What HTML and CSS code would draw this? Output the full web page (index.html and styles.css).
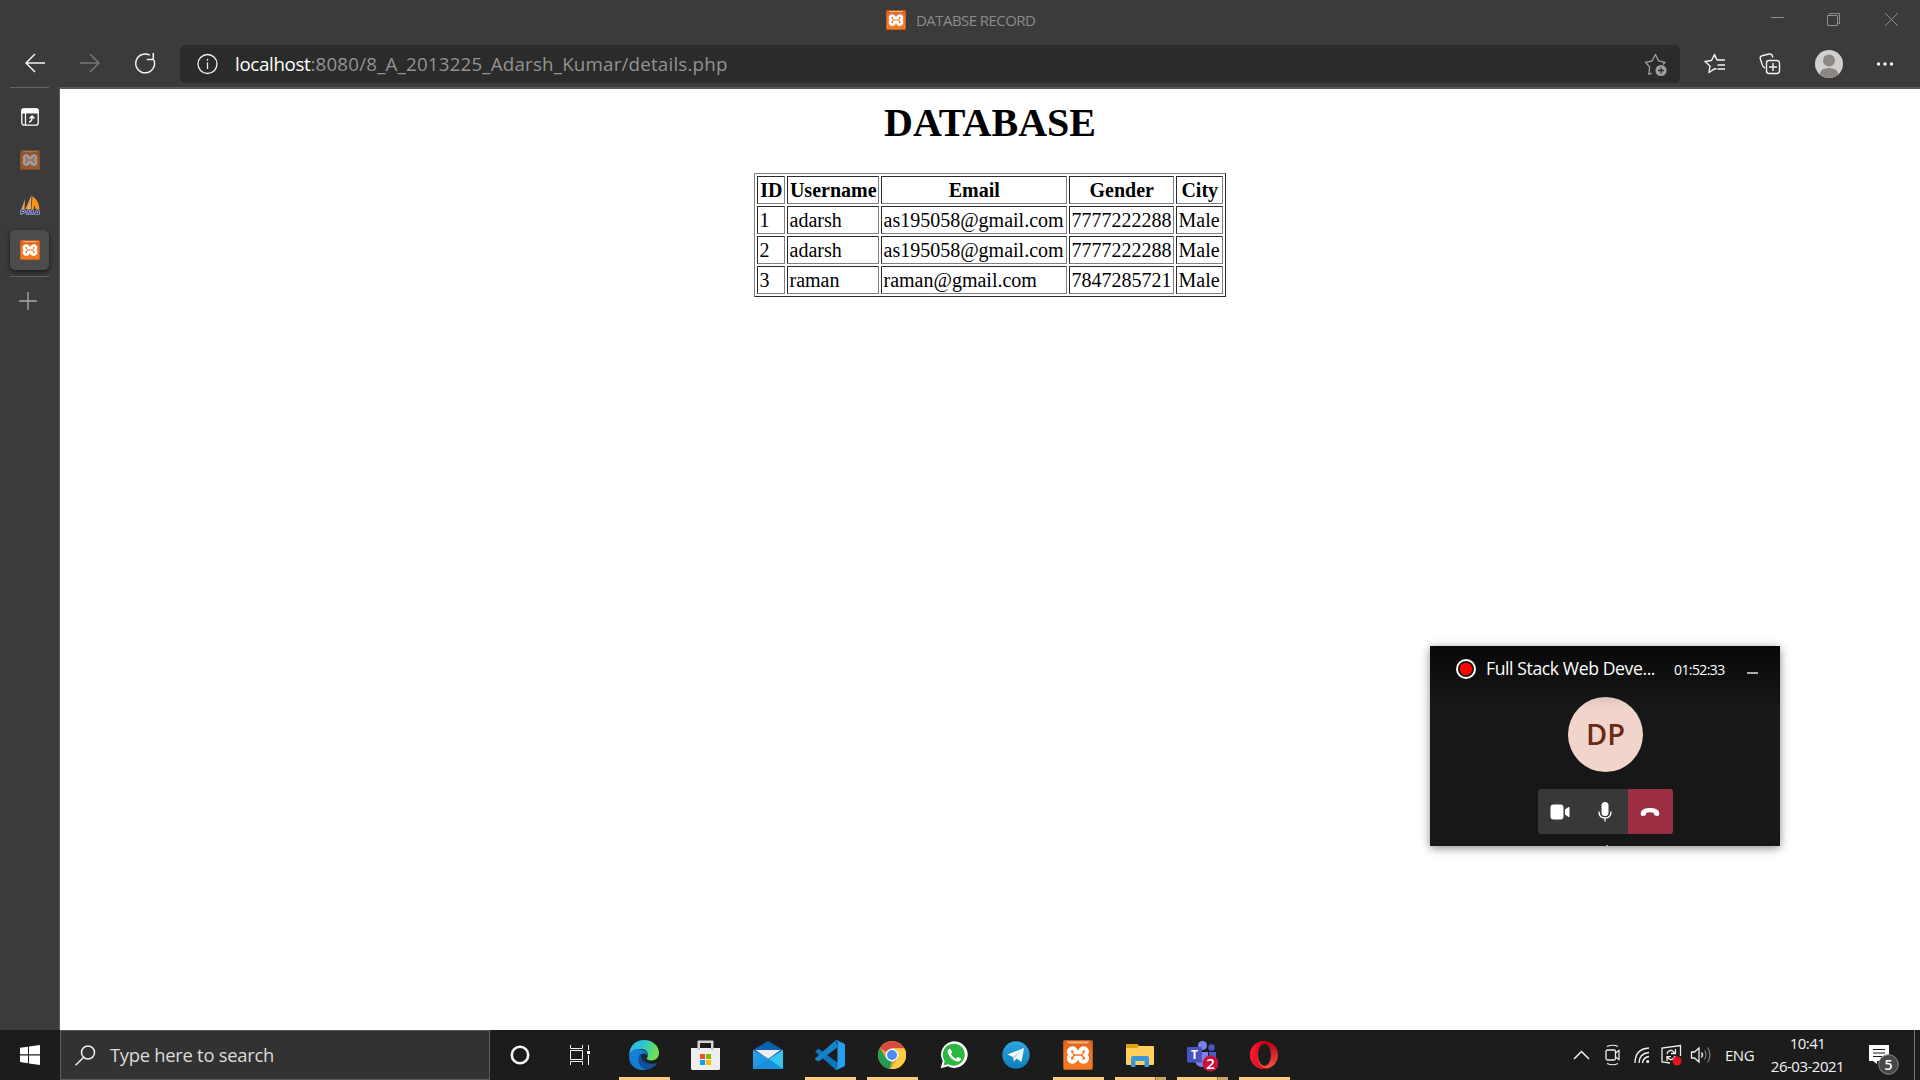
FILE: index.html
```html
<!DOCTYPE html>
<html lang="en">
<head>
<meta charset="utf-8">
<title>DATABSE RECORD</title>
<link rel="stylesheet" href="styles.css">
</head>
<body>
<svg width="0" height="0" class="defs" aria-hidden="true">
  <defs>
    <linearGradient id="gx" x1="0" y1="0" x2="0" y2="1"><stop offset="0" stop-color="#d9651b"/><stop offset=".5" stop-color="#f3752a"/><stop offset="1" stop-color="#f37a20"/></linearGradient>
    <linearGradient id="ge1" x1="0" y1="0" x2="1" y2=".3"><stop offset="0" stop-color="#35b1f0"/><stop offset=".5" stop-color="#2dc6d3"/><stop offset="1" stop-color="#70e052"/></linearGradient>
    <linearGradient id="ge2" x1="0" y1="0" x2=".6" y2="1"><stop offset="0" stop-color="#1583d8"/><stop offset="1" stop-color="#1279d2"/></linearGradient>
    <linearGradient id="gt" x1="0" y1="0" x2="0" y2="1"><stop offset="0" stop-color="#2ea5e0"/><stop offset="1" stop-color="#0f7ebc"/></linearGradient>
    <linearGradient id="go" x1="0" y1="0" x2="1" y2="0"><stop offset="0" stop-color="#ff1b2d"/><stop offset="1" stop-color="#c40019"/></linearGradient>
    <linearGradient id="go2" x1="0" y1="0" x2="0" y2="1"><stop offset="0" stop-color="#b00012"/><stop offset="1" stop-color="#ff5548"/></linearGradient>
    <linearGradient id="gm" x1="0" y1="0" x2="1" y2="1"><stop offset="0" stop-color="#2da6ee"/><stop offset="1" stop-color="#0f80d4"/></linearGradient>
  </defs>
  <symbol id="xampp" viewBox="0 0 30 30">
    <rect width="30" height="30" rx="2" fill="#b85a1e"/>
    <rect x="1" y="1" width="28" height="28" rx="1.5" fill="url(#gx)"/>
    <path d="M4 1.5H26Q26 3.5 22 3.5H8Q4 3.5 4 1.5Z" fill="#f7b183"/>
    <path d="M12.300 10A3.400 3.400 0 1 0 8.200 14.900A3.600 3.600 0 1 0 12.500 20.200V17.800H17.500V20.200A3.600 3.600 0 1 0 21.800 14.900A3.400 3.400 0 1 0 17.700 10V12.200H12.300Z" fill="none" stroke="#fff" stroke-width="4" stroke-linejoin="round"/>
  </symbol>
</svg>

<div class="browser">
  <header class="titlebar">
    <div class="tab-title"><svg width="20" height="20"><use href="#xampp"/></svg><span>DATABSE RECORD</span></div>
    <svg class="window-buttons" width="130" height="16" fill="none" stroke="#8e8e8e">
      <path d="M1 6.500H14M57.500 4.500H67.500V14.500H57.500ZM59.500 4V2.500H69.500V12.500H68M115 2L128 15M128 2L115 15"/>
    </svg>
  </header>

  <nav class="toolbar">
    <svg class="nav-icons" width="140" height="24" fill="none" stroke="#f2f2f2" stroke-width="1.500">
      <path d="M20 12H1M10 3L1 12L10 21"/>
      <path d="M55 12H74M65 3L74 12L65 21" stroke="#777"/>
      <path d="M129 9.200A9.400 9.400 0 1 1 124.800 4.200M128.300 2V8.500H121.800"/>
    </svg>
    <div class="address">
      <svg width="22" height="22" fill="none" stroke="#eee" stroke-width="1.300"><circle cx="10.500" cy="11" r="9.500"/><path d="M10.500 9.500V16M10.500 6V7.700"/></svg>
      <div class="url"><b>localhost</b>:8080/8_A_2013225_Adarsh_Kumar/details.php</div>
      <svg width="24" height="24" fill="none" stroke="#a0a0a0" stroke-width="1.300"><path d="M8 20L4.800 21.300L5.700 14L1.500 9.300L8 8L11.500 1.500L14.500 7.800L21 9.300L19 11.500" stroke-linejoin="round"/><circle cx="17" cy="17.500" r="5.600" fill="#a0a0a0" stroke="none"/><path d="M17 14.500V20.500M14 17.500H20" stroke="#2b2b2b"/></svg>
    </div>
    <div class="actions">
      <svg width="22" height="22" fill="none" stroke="#f2f2f2" stroke-width="1.500"><path d="M12.500 16L10.500 15.800L5 19.500L6 13L1 8.500L7.500 7.500L10.500 1.500L13 7H21M13.500 12H21M13.500 16H21" stroke-linejoin="round"/></svg>
      <svg width="22" height="22" fill="none" stroke="#f2f2f2" stroke-width="1.400"><path d="M6 15Q3.500 14 3 11L1.200 5.500Q.8 3.200 3 2.800L10 1Q12.500.6 13.200 2.500L13.800 4.500"/><rect x="7.500" y="7.500" width="13" height="13" rx="2.500"/><path d="M14 10V18M10 14H18"/></svg>
      <svg width="28" height="28"><circle cx="14" cy="14" r="14" fill="#d2d0ce"/><circle cx="14" cy="10.500" r="6" fill="#8b8784"/><path d="M4.500 24.200Q6 18 14 18T23.500 24.200A14 14 0 0 1 4.500 24.200Z" fill="#8b8784"/></svg>
      <svg width="18" height="6" fill="#f5f5f5"><circle cx="2.500" cy="3" r="1.700"/><circle cx="9" cy="3" r="1.700"/><circle cx="15.500" cy="3" r="1.700"/></svg>
    </div>
  </nav>

  <div class="main">
    <aside class="tabs">
      <div class="tab first"><svg width="18" height="18" fill="none" stroke="#fff"><rect x=".8" y=".8" width="16.400" height="16.400" rx="2.500" stroke-width="1.300"/><path d="M1 1H17V5H1Z" fill="#fff"/><path d="M4.500 5V17" stroke-width="1.300"/><path d="M8 14Q11.500 13 11 8.500M8.500 10.500L11 8L13.500 10.500" stroke-width="1.400"/></svg></div>
      <div class="tab second"><svg width="20" height="20"><use href="#xampp"/></svg></div>
      <div class="tab third"><svg width="20" height="20"><path d="M5 4L1.500 14H4.500ZM11.500 0L5.500 14H11Z" fill="#eba35c"/><path d="M12.500 1L11.500 14H13.500L14.500 10L15.500 14H19.500Q19 6 12.500 1Z" fill="#f7941e"/><text x="0" y="19.500" class="pma" textLength="20">PMA</text></svg></div>
      <div class="tab active"><svg width="20" height="20"><use href="#xampp"/></svg></div>
      <div class="new-tab"><svg width="18" height="18" stroke="#aaa" stroke-width="1.300"><path d="M0 9H18M9 0V18"/></svg></div>
    </aside>
    <main class="page">
      <h1>DATABASE</h1>
      <table>
        <colgroup><col class="c-id"><col class="c-user"><col class="c-mail"><col class="c-gender"><col class="c-city"></colgroup>
        <tr><th>ID</th><th>Username</th><th>Email</th><th>Gender</th><th>City</th></tr>
        <tr><td>1</td><td>adarsh</td><td>as195058@gmail.com</td><td>7777222288</td><td>Male</td></tr>
        <tr><td>2</td><td>adarsh</td><td>as195058@gmail.com</td><td>7777222288</td><td>Male</td></tr>
        <tr><td>3</td><td>raman</td><td>raman@gmail.com</td><td>7847285721</td><td>Male</td></tr>
      </table>
    </main>
  </div>
</div>

<section class="call">
  <div class="call-head">
    <svg width="20" height="20"><circle cx="10" cy="10" r="9" fill="#111" stroke="#fff" stroke-width="2"/><circle cx="10" cy="10" r="6.300" fill="#f00"/></svg>
    <span class="call-title">Full Stack Web Deve...</span>
    <span class="call-time">01:52:33</span>
    <i class="call-min"></i>
  </div>
  <div class="avatar">DP</div>
  <div class="call-buttons">
    <div><svg width="20" height="16" fill="#fff"><rect x=".5" y=".5" width="13" height="15" rx="3"/><path d="M15 5.500L18.500 3Q19.500 2.500 19.500 4V12Q19.500 13.500 18.500 13L15 10.500Z"/></svg></div>
    <div><svg width="14" height="20" fill="#fff"><rect x="3.500" y="0" width="7" height="14" rx="3.500"/><path d="M1 9.500Q1 16 7 16T13 9.500M7 16V19.500" fill="none" stroke="#fff" stroke-width="1.300"/></svg></div>
    <div class="hang"><svg width="20" height="10"><path d="M.7 6Q1.500 1 10 1T19.300 6Q19.500 9 17.500 9L15 8.500Q13.800 8.200 13.700 5.800Q10 4.500 6.300 5.800Q6.200 8.200 5 8.500L2.500 9Q.5 9 .7 6Z" fill="#fff"/></svg></div>
  </div>
  <i class="call-handle"></i>
</section>

<footer class="taskbar">
  <div class="start"><svg width="20" height="20" fill="#fff"><path d="M0 2.800L8 1.700V9.300H0ZM9 1.500L20 0V9.300H9ZM0 10.400H8V18.200L0 17.100ZM9 10.400H20V20L9 18.400Z"/></svg></div>
  <div class="search"><svg width="21" height="21" fill="none" stroke="#eee" stroke-width="1.500"><circle cx="13" cy="7.500" r="6.500"/><path d="M8.500 12.500L.5 20.300"/></svg><span>Type here to search</span></div>
  <div class="sys"><svg width="20" height="20"><circle cx="10" cy="10" r="8.200" fill="none" stroke="#f5f5f5" stroke-width="2.600"/></svg></div>
  <div class="sys"><svg width="20" height="20" fill="none" stroke="#f5f5f5"><path d="M.5 0V3.500H12.500V0M.5 5.500H12.500V14.500H.5ZM.5 20V16.500H12.500V20M18.500 0V5M18.500 10V20"/><path d="M17 6H20V9H17Z" fill="#fff" stroke="none"/></svg></div>
  <div class="apps">
    <div class="app open"><svg width="30" height="30"><path d="M.5 12C2 4 8 0 15 0C24 0 30 6 30 13C30 18 26 20.500 22 20.500C18 20.500 17 18.500 18.500 17C20 14 18 9 12 9C7 9 2 12 .3 16Z" fill="url(#ge1)"/><path d="M.3 16C1 10 6 8.500 10 9.500C17 10 20 13 18 17C18 14 12 13 10.500 17C8.500 23 12 28 18 29.500C8 32-1 25 .3 16Z" fill="url(#ge2)"/><path d="M12 13.500C7 17 9 27 18 29.700C23 28.700 26.500 26 28 23C26 22.500 26 24.500 20 23.500C15 22.500 12 18 12 13.500Z" fill="#12509c"/><path d="M18.300 17C18.500 13 13 12.500 12.500 15.500C12 18.500 14 21.500 16.500 22.500C19 23.300 21 22 21.500 20.500C18 20.500 17 18.500 18.300 17Z" fill="#1d2a3a"/></svg></div>
    <div class="app"><svg width="30" height="30"><path d="M6.500 10V1.500Q6.500.5 7.500.5H21.500Q22.500.5 22.500 1.500V10H20V3H9V10Z" fill="#d6d6d6"/><path d="M0 8H29V28.500Q29 30 27.500 30H1.500Q0 30 0 28.500Z" fill="#eee"/><path d="M6.500 8H9V10H6.500ZM20 8H22.500V10H20Z" fill="#c6c6c6"/><path d="M9 14H14V19H9Z" fill="#f25022"/><path d="M15 14H20V19H15Z" fill="#7fba00"/><path d="M9 20H14V25H9Z" fill="#00a4ef"/><path d="M15 20H20V25H15Z" fill="#ffb900"/></svg></div>
    <div class="app"><svg width="30" height="30"><path d="M0 10L15 1L30 10V18H0Z" fill="#0b62b0"/><path d="M2.500 10H27.500L15 19Z" fill="#eee"/><path d="M0 10L17 19.500L30 29H0Z" fill="url(#gm)"/><path d="M30 10L14 20L30 29Z" fill="#36c5f0"/><path d="M0 29L14 20L16 19L30 29Z" fill="#1a8fdd"/></svg></div>
    <div class="app open"><svg width="30" height="30"><path d="M.5 11L3.500 8.500L23 23V29L20.500 29.500L.5 12Z" fill="#0b76bd"/><path d="M0 18.500L20.500.3L23 7L3.500 21.500L.5 20Z" fill="#1683c8"/><path d="M21.500 0L29 3.500Q30 4 30 5V25Q30 26 29 26.500L21.500 30L20.500 29.300L22.500 28V2L20.500.5Z" fill="#279fec"/></svg></div>
    <div class="app open"><svg width="28" height="28"><circle cx="14" cy="14" r="14" fill="#e6a42b"/><path d="M14 14L2 7A14 14 0 0 1 26 7H14Z" fill="#d8493e"/><path d="M2 7L8 17.500L14 21L11.500 27.800A14 14 0 0 1 2 7Z" fill="#1e9d58"/><path d="M14 7.500H26.500A14 14 0 0 1 12.500 28L20 17.500Z" fill="#ffcd40"/><circle cx="14" cy="14" r="6.500" fill="#f5f5f5"/><circle cx="14" cy="14" r="5" fill="#4c8bf5"/></svg></div>
    <div class="app"><svg width="28" height="28"><path d="M.7 27.200L2.700 20A13.300 13.300 0 1 1 8 25.300Z" fill="#fff"/><path d="M3.500 24.400L4.700 19.900A11 11 0 1 1 8.300 23.200Z" fill="#2cb742"/><path d="M10 7.500C8 8 7 10 8 12.500C10 17 13 19.500 17 20.500C19 21 21 19.500 21 17.500L17.800 16L16.300 17.700C13.500 16.500 12 15 11 12.700L12.200 11Z" fill="#fff"/></svg></div>
    <div class="app"><svg width="28" height="28"><circle cx="14" cy="14" r="13.700" fill="url(#gt)"/><path d="M5.500 13.500L22 7L19.500 21L14.500 17.500L12 20.500L11 16Z" fill="#f3f9fd"/><path d="M11 16L19.500 9.500L12.500 17L12 20.500Z" fill="#b8d4e6"/></svg></div>
    <div class="app open"><svg width="30" height="30"><use href="#xampp"/></svg></div>
    <div class="app open multi"><svg width="28" height="26"><path d="M0 2.500Q0 2 1 2H11L13 4H27Q28 4 28 5V22Q28 23 27 23H1Q0 23 0 22Z" fill="#ffd15c"/><path d="M0 2H11L13 4L11 6H0Z" fill="#e2a10b"/><path d="M5 25V16Q5 14 7 14H21Q23 14 23 16V25H18.500V19H9.500V25Z" fill="#3b96dc"/></svg></div>
    <div class="app open multi"><svg width="32" height="34"><circle cx="16.500" cy="7.500" r="4.500" fill="#7b83eb"/><circle cx="25.500" cy="9.500" r="3.200" fill="#5059c9"/><path d="M23 14H30V24H23Z" fill="#5059c9"/><path d="M9 14H22V23Q20 29 15 29Q10 28 9 23Z" fill="#7b83eb"/><rect x="1" y="9" width="15" height="15.500" rx="1" fill="#4b53bc"/><text x="5" y="21" class="teams-letter">T</text><circle cx="24.500" cy="25.500" r="8" fill="#c4143b"/><text x="20.300" y="31" class="teams-count">2</text></svg></div>
    <div class="app open"><svg width="30" height="30"><ellipse cx="15" cy="15" rx="14" ry="14" fill="url(#go2)"/><path d="M19 1.600A14 14 0 1 0 19 28.400Q8 28 8 15T19 1.600Z" fill="url(#go)"/><ellipse cx="15.500" cy="15" rx="6.500" ry="11" fill="#1d1d1d"/></svg></div>
  </div>
  <div class="tray">
    <svg width="140" height="24" fill="none" stroke="#f0f0f0" stroke-width="1.300">
      <path d="M1 16L8.500 8.500L16 16" stroke-width="1.500"/>
      <rect x="33" y="7" width="9.500" height="10" rx="1.500"/><path d="M42.500 10L46 7.500V16.500L42.500 14M34 3.500Q40 1 45 3.500M34 20.500Q40 23 45 20.500" stroke-width="1.200"/>
      <path d="M62 20Q62 6 76 5M66 20Q66 10.500 76 9.500M69.500 20Q70 14.500 76 13.500" stroke-width="1.400"/><circle cx="74.700" cy="18.500" r="1.500" fill="#fff" stroke="none"/>
      <path d="M97 20L89 19V5L107.500 2.500V13M94 11Q95 7 99 7.500L102 10M102.500 6V10.500H98M102 13Q101 17 97 16.500L94.500 14.500M94 18V13.700H98"/><circle cx="104" cy="18" r="4.500" fill="#e81123" stroke="none"/>
      <path d="M118.500 9H121.500L126 5V19L121.500 15H118.500Z"/><path d="M128.500 9.500Q130.500 12 128.500 14.500"/><path d="M131.500 7.500Q134.500 12 131.500 16.500M134.500 4.500Q139.500 12 134.500 19.500" stroke="#777"/>
    </svg>
    <span class="lang">ENG</span>
    <div class="clock"><span>10:41</span><span>26-03-2021</span></div>
    <div class="notice"><svg width="32" height="32"><path d="M1 1H21V17H9V20L5 17H1Z" fill="#fff"/><path d="M5 5.500H17M5 9H17M5 12.500H14" stroke="#1c1c1c"/><circle cx="20.500" cy="20.500" r="9.800" fill="#484848" stroke="#888"/><text x="16.500" y="25.700" class="notice-count">5</text></svg></div>
    <i class="peek"></i>
  </div>
</footer>
</body>
</html>
```
FILE: styles.css
```css
* { box-sizing: border-box; }
body { margin: 0; width: 1920px; height: 1080px; overflow: hidden; display: flex; flex-direction: column; background: #3b3b3b; font-family: "Open Sans", "Noto Sans", sans-serif; }
svg { display: block; flex: none; }
.defs { position: absolute; }
.browser { height: 1030px; display: flex; flex-direction: column; }

.titlebar { height: 40px; display: flex; justify-content: space-between; padding: 10px 20px 0 886px; }
.tab-title { display: flex; gap: 10px; height: 20px; align-items: center; color: #8b8b8b; font-size: 15px; white-space: nowrap; letter-spacing: -.55px; }
.window-buttons { margin-top: 1px; }

.toolbar { height: 47px; display: flex; padding: 5px 24px 4px 25px; }
.nav-icons { margin: 6px 15px 0 0; }
.address { width: 1500px; height: 38px; display: flex; align-items: center; padding: 0 12px 0 17px; background: #2b2b2b; border-radius: 5px; }
.url { flex: 1; margin: -2px 0 0 16px; color: #939393; font-size: 18.75px; white-space: nowrap; letter-spacing: .19px; }
.url b { color: #fff; font-weight: 400; letter-spacing: -.35px; }
.address svg:last-child { margin-top: 2px; }
.actions { flex: 1; display: flex; align-items: center; justify-content: space-between; padding: 0 2px 0 24px; }

.main { flex: 1; display: flex; }
.tabs { width: 59px; padding: 0 10px; display: flex; flex-direction: column; }
.tab { height: 40px; width: 39px; display: flex; align-items: center; justify-content: center; padding-left: 1px; }
.first { height: 46px; border-top: 1px solid #666; padding-top: 13px; }
.second { margin-top: 7px; opacity: .5; }
.third { margin-top: 5px; }
.active { margin-top: 5px; background: #4c4c4c; border-radius: 5px; box-shadow: 0 2px 5px #0009; }
.new-tab { margin-top: 6px; padding: 15px 9px; border-top: 1px solid #5f5f5f; }
.pma { font: italic bold 8px "Liberation Sans", sans-serif; fill: #35358b; stroke: #d0d0e0; stroke-width: 1.2px; paint-order: stroke; }

.page { flex: 1; background: #fff; border-left: 1px solid #5a5a5a; border-top: 2px solid #5a5a5a; padding-top: 11px; color: #000; font-family: "Liberation Serif", serif; }
h1 { margin: 0 0 27px; font-size: 40px; line-height: 46px; text-align: center; }
table { width: 472px; table-layout: fixed; margin: 0 auto; border: 1px solid; border-color: #808080 #2b2b2b #2b2b2b #808080; border-spacing: 2px; font-size: 20px; line-height: 23px; white-space: nowrap; }
th, td { height: 28px; border: 1px solid; border-color: #2b2b2b #808080 #808080 #2b2b2b; padding: 2px 1px 1px 1.5px; }
.c-id { width: 28px; }
.c-user { width: 92px; }
.c-mail { width: 186px; }
.c-gender { width: 105px; }
.c-city { width: 47px; }

.call { position: absolute; left: 1430px; top: 646px; width: 350px; height: 200px; display: flex; flex-direction: column; align-items: center; background: linear-gradient(#080808, #171717 60px); box-shadow: 0 2px 9px #0007; color: #fff; }
.call-head { width: 100%; height: 46px; display: flex; align-items: center; padding: 0 22px 0 26px; white-space: nowrap; }
.call-title { width: 188px; margin-left: 10px; font-size: 17.6px; letter-spacing: -.4px; margin-top: -2px; }
.call-time { width: 73px; font-size: 14px; letter-spacing: -.6px; }
.call-min { width: 11px; height: 2px; margin-top: 7px; background: #aaa; }
.avatar { width: 75px; height: 75px; margin: 5px 0 17px 1px; border-radius: 50%; background: linear-gradient(#dfc5be, #f1d5cd 12px); color: #6b2a17; font-size: 29px; font-weight: 600; line-height: 73px; text-align: center; }
.call-buttons { display: flex; margin-left: 1px; border-radius: 3px; overflow: hidden; }
.call-buttons div { width: 45px; height: 45px; display: flex; align-items: center; justify-content: center; padding-right: 1px; background: #383838; }
.call-buttons .hang { background: #9b2e43; }
.call-handle { width: 2px; height: 1px; margin: 11px 0 0 3px; background: #999; }

.taskbar { height: 50px; display: flex; background: #1c1c1c; color: #f2f2f2; }
.start, .sys { width: 60px; display: flex; align-items: center; justify-content: center; }
.search { width: 430px; display: flex; align-items: center; gap: 14px; padding-left: 14px; background: #323232; border: 1px solid #5c5c5c; color: #dcdcdc; font-size: 18.4px; letter-spacing: -.28px; white-space: nowrap; }
.search span { margin-top: -2px; }
.apps { display: flex; margin-left: 3px; }
.app { width: 62px; height: 50px; display: flex; align-items: center; justify-content: center; }
.open { background: linear-gradient(#ffcb7d, #ffcb7d) 6px 47px / 51px 3px no-repeat; }
.multi { background: linear-gradient(90deg, #ffcb7d 40px, #8c6d42 40px 41px, #cda365 41px) 6px 47px / 51px 3px no-repeat; }
.teams-letter { font: bold 12px "Open Sans", sans-serif; fill: #fff; }
.teams-count { font: 600 15px "Open Sans", sans-serif; fill: #fff; }
.tray { flex: 1; display: flex; align-items: center; justify-content: flex-end; }
.lang { width: 45px; margin-left: 12px; font-size: 15px; letter-spacing: -.5px; }
.clock { width: 75px; height: 50px; display: flex; flex-direction: column; align-items: center; padding-top: 2px; font-size: 15px; line-height: 23px; letter-spacing: -.5px; white-space: nowrap; }
.notice { width: 46px; margin: 10px 0 0 23px; }
.notice-count { font: 600 14px "Open Sans", sans-serif; fill: #fff; }
.peek { width: 6px; height: 50px; border-left: 1px solid #777; }
```
